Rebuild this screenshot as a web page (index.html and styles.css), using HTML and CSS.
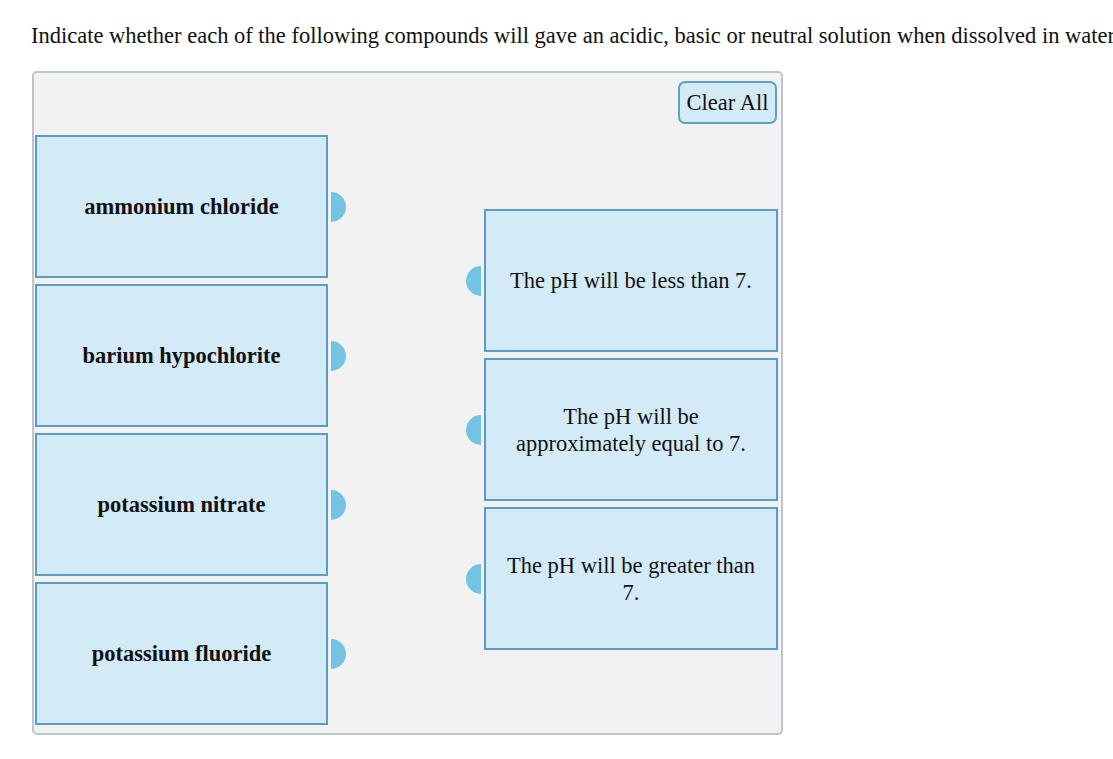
FILE: index.html
```html
<!DOCTYPE html>
<html>

<head>
    <title>Acidic, Basic or Neutral</title>
    <link rel="stylesheet" href="styles.css">
</head>

<body>

    <p class="prompt">Indicate whether each of the following compounds will gave an acidic, basic or neutral solution when dissolved in water</p>

    <div class="match-area">
        <div class="toolbar">
            <button class="clear-btn">Clear All</button>
        </div>

        <div class="board">
            <!-- compounds -->
            <div class="column sources">
                <div class="card source">ammonium chloride</div>
                <div class="card source">barium hypochlorite</div>
                <div class="card source">potassium nitrate</div>
                <div class="card source">potassium fluoride</div>
            </div>

            <!-- answers -->
            <div class="column targets">
                <div class="card target">The pH will be less than 7.</div>
                <div class="card target">The pH will be approximately equal to 7.</div>
                <div class="card target">The pH will be greater than 7.</div>
            </div>
        </div>
    </div>

</body>

</html>
```

FILE: styles.css
```css
body {
    margin: 0;
    font-family: "Liberation Serif", "Times New Roman", serif;
    color: #111;
    background: #fff;
}

.prompt {
    margin: 0;
    padding: 21px 0 0 31px;
    font-size: 22.5px;
    line-height: 29px;
    white-space: nowrap;
    overflow: hidden;
}

.match-area {
    margin: 21px 0 0 32px;
    width: 747px;
    height: 660px;
    border: 2px solid #bcc6d1;
    border-radius: 5px;
    background: #f2f2f2;
}

.toolbar {
    display: flex;
    justify-content: flex-end;
    padding: 8px 4px 0 0;
}

.clear-btn {
    font-family: "Liberation Serif", "Times New Roman", serif;
    font-size: 22.5px;
    color: #111;
    width: 99px;
    height: 43px;
    padding: 0;
    border: 2px solid #5e9fc3;
    border-radius: 7px;
    background: #d3eaf7;
    cursor: pointer;
}

.board {
    display: flex;
    justify-content: space-between;
    padding: 11px 3px 0 1px;
}

.column {
    display: flex;
    flex-direction: column;
    gap: 6px;
}

.targets {
    padding-top: 74px;
}

.card {
    position: relative;
    box-sizing: border-box;
    height: 143px;
    display: flex;
    align-items: center;
    justify-content: center;
    text-align: center;
    border: 2px solid #5b9cc2;
    background: #d3eaf7;
}

.source {
    width: 293px;
    font-size: 22.5px;
    font-weight: bold;
}

.target {
    width: 294px;
    padding: 0 16px;
    font-size: 22.5px;
    line-height: 27px;
}

/* drag handles */
.card::after {
    content: "";
    position: absolute;
    top: 50%;
    width: 15px;
    height: 30px;
    margin-top: -15px;
    background: #73c3e3;
}

.source::after {
    right: -20px;
    border-radius: 0 15px 15px 0;
}

.target::after {
    left: -20px;
    border-radius: 15px 0 0 15px;
}
```
